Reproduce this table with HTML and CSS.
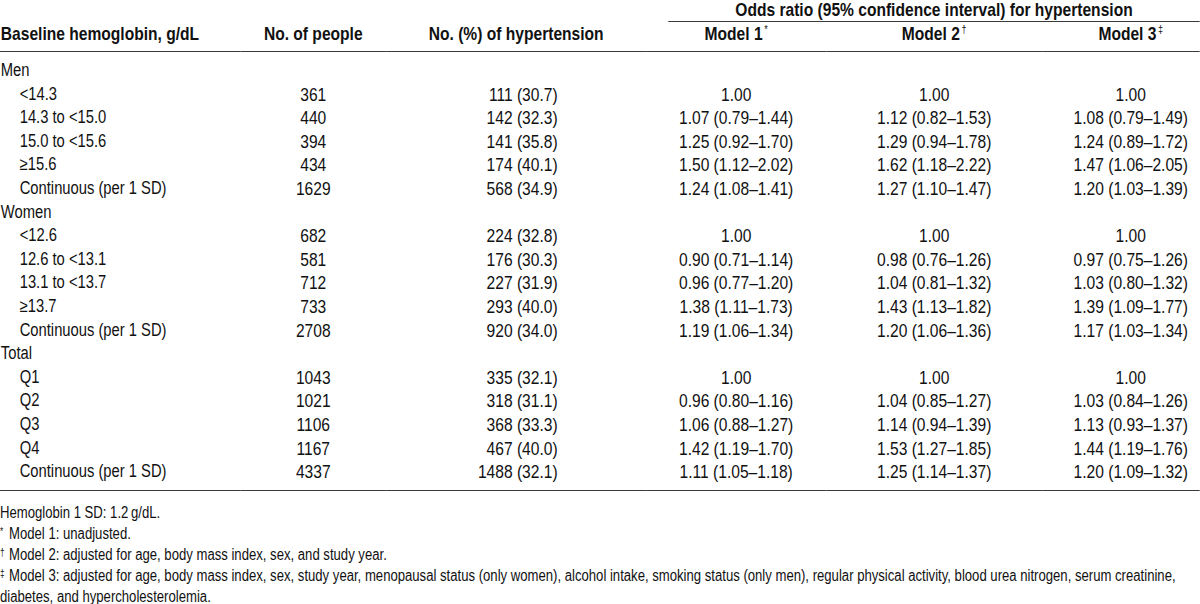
FILE: index.html
```html
<!DOCTYPE html>
<html lang="en">
<head>
<meta charset="utf-8">
<title>Hemoglobin and hypertension</title>
<link rel="stylesheet" href="styles.css">
</head>
<body>
<div class="frame">
<div class="page">
<table class="tbl">
  <colgroup>
    <col class="w1"><col class="w2"><col class="w3"><col class="w4"><col class="w5"><col class="w6">
  </colgroup>
  <thead>
    <tr class="hr1">
      <th rowspan="2" class="hl hb">Baseline hemoglobin, g/dL</th>
      <th rowspan="2" class="hb">No. of people</th>
      <th rowspan="2" class="hb">No. (%) of hypertension</th>
      <th colspan="3" class="hspan"><div class="hspan-in">Odds ratio (95% confidence interval) for hypertension</div></th>
    </tr>
    <tr class="hr2">
      <th class="hb">Model 1<sup>*</sup></th>
      <th class="hb">Model 2<sup>†</sup></th>
      <th class="hb c6">Model 3<sup>‡</sup></th>
    </tr>
  </thead>
  <tbody>
    <tr class="first"><td class="grp">Men</td><td></td><td></td><td></td><td></td><td></td></tr>
    <tr><td class="sub">&lt;14.3</td><td class="n">361</td><td class="p">111 (30.7)</td><td class="n">1.00</td><td class="n">1.00</td><td class="n c6">1.00</td></tr>
    <tr><td class="sub">14.3 to &lt;15.0</td><td class="n">440</td><td class="p">142 (32.3)</td><td class="n">1.07 (0.79–1.44)</td><td class="n">1.12 (0.82–1.53)</td><td class="n c6">1.08 (0.79–1.49)</td></tr>
    <tr><td class="sub">15.0 to &lt;15.6</td><td class="n">394</td><td class="p">141 (35.8)</td><td class="n">1.25 (0.92–1.70)</td><td class="n">1.29 (0.94–1.78)</td><td class="n c6">1.24 (0.89–1.72)</td></tr>
    <tr><td class="sub">≥15.6</td><td class="n">434</td><td class="p">174 (40.1)</td><td class="n">1.50 (1.12–2.02)</td><td class="n">1.62 (1.18–2.22)</td><td class="n c6">1.47 (1.06–2.05)</td></tr>
    <tr><td class="sub">Continuous (per 1 SD)</td><td class="n">1629</td><td class="p">568 (34.9)</td><td class="n">1.24 (1.08–1.41)</td><td class="n">1.27 (1.10–1.47)</td><td class="n c6">1.20 (1.03–1.39)</td></tr>
    <tr><td class="grp">Women</td><td></td><td></td><td></td><td></td><td></td></tr>
    <tr><td class="sub">&lt;12.6</td><td class="n">682</td><td class="p">224 (32.8)</td><td class="n">1.00</td><td class="n">1.00</td><td class="n c6">1.00</td></tr>
    <tr><td class="sub">12.6 to &lt;13.1</td><td class="n">581</td><td class="p">176 (30.3)</td><td class="n">0.90 (0.71–1.14)</td><td class="n">0.98 (0.76–1.26)</td><td class="n c6">0.97 (0.75–1.26)</td></tr>
    <tr><td class="sub">13.1 to &lt;13.7</td><td class="n">712</td><td class="p">227 (31.9)</td><td class="n">0.96 (0.77–1.20)</td><td class="n">1.04 (0.81–1.32)</td><td class="n c6">1.03 (0.80–1.32)</td></tr>
    <tr><td class="sub">≥13.7</td><td class="n">733</td><td class="p">293 (40.0)</td><td class="n">1.38 (1.11–1.73)</td><td class="n">1.43 (1.13–1.82)</td><td class="n c6">1.39 (1.09–1.77)</td></tr>
    <tr><td class="sub">Continuous (per 1 SD)</td><td class="n">2708</td><td class="p">920 (34.0)</td><td class="n">1.19 (1.06–1.34)</td><td class="n">1.20 (1.06–1.36)</td><td class="n c6">1.17 (1.03–1.34)</td></tr>
    <tr><td class="grp">Total</td><td></td><td></td><td></td><td></td><td></td></tr>
    <tr><td class="sub">Q1</td><td class="n">1043</td><td class="p">335 (32.1)</td><td class="n">1.00</td><td class="n">1.00</td><td class="n c6">1.00</td></tr>
    <tr><td class="sub">Q2</td><td class="n">1021</td><td class="p">318 (31.1)</td><td class="n">0.96 (0.80–1.16)</td><td class="n">1.04 (0.85–1.27)</td><td class="n c6">1.03 (0.84–1.26)</td></tr>
    <tr><td class="sub">Q3</td><td class="n">1106</td><td class="p">368 (33.3)</td><td class="n">1.06 (0.88–1.27)</td><td class="n">1.14 (0.94–1.39)</td><td class="n c6">1.13 (0.93–1.37)</td></tr>
    <tr><td class="sub">Q4</td><td class="n">1167</td><td class="p">467 (40.0)</td><td class="n">1.42 (1.19–1.70)</td><td class="n">1.53 (1.27–1.85)</td><td class="n c6">1.44 (1.19–1.76)</td></tr>
    <tr class="last"><td class="sub">Continuous (per 1 SD)</td><td class="n">4337</td><td class="p">1488 (32.1)</td><td class="n">1.11 (1.05–1.18)</td><td class="n">1.25 (1.14–1.37)</td><td class="n c6">1.20 (1.09–1.32)</td></tr>
  </tbody>
</table>
<div class="notes">
  <p class="note">Hemoglobin 1 SD: 1.2&#8201;g/dL.</p>
  <p class="note"><sup class="mark">*</sup>Model 1: unadjusted.</p>
  <p class="note"><sup class="mark">†</sup>Model 2: adjusted for age, body mass index, sex, and study year.</p>
  <p class="note"><sup class="mark">‡</sup>Model 3: adjusted for age, body mass index, sex, study year, menopausal status (only women), alcohol intake, smoking status (only men), regular physical activity, blood urea nitrogen, serum creatinine, diabetes, and hypercholesterolemia.</p>
</div>
</div>
</div>
</body>
</html>
```
FILE: styles.css
```css
html, body {
  margin: 0;
  padding: 0;
  background: #ffffff;
  overflow: hidden;
}

body {
  color: #111111;
  font-family: "Liberation Sans", Arial, sans-serif;
}

.frame {
  width: 1200px;
  overflow: hidden;
}

/* The reference is set in a condensed grotesque; the sheet is laid out
   at 1/0.82 of its width and narrowed back to 1200px. */
.page {
  width: 1463px;
  transform: scaleX(0.82);
  transform-origin: 0 0;
}

.tbl {
  width: 1463px;
  border-collapse: collapse;
  table-layout: fixed;
  font-size: 18px;
}

.w1 { width: 293px; }
.w2 { width: 178px; }
.w3 { width: 317px; }
.w4 { width: 219.5px; }
.w5 { width: 263.5px; }
.w6 { width: 192px; }

th {
  font-weight: bold;
  font-size: 19px;
  padding: 0;
  text-align: center;
  vertical-align: bottom;
  white-space: nowrap;
}

th.hl {
  text-align: left;
  padding-left: 1px;
}

.hr1 th.hspan {
  height: 23px;
  vertical-align: top;
}

.hspan-in {
  margin-left: 27px;
  line-height: 20px;
  padding-bottom: 1px;
  border-bottom: 1.5px solid #3a3a3a;
}

th.hb {
  border-bottom: 1.5px solid #3a3a3a;
  padding-bottom: 6px;
  line-height: 22px;
}

th.c6, td.c6 {
  padding-left: 24px;
}

sup {
  font-size: 11px;
  font-weight: normal;
  vertical-align: 7px;
  line-height: 0;
  margin-left: 2px;
}

td {
  padding: 0;
  line-height: 23.6px;
  white-space: nowrap;
}

td.grp {
  padding-left: 1px;
}

td.sub {
  padding-left: 24px;
}

td.n {
  text-align: center;
  font-size: 19px;
}

td.p {
  text-align: right;
  padding-right: 108px;
  font-size: 19px;
}

tr.first td {
  padding-top: 7px;
}

tr.last td {
  padding-bottom: 6px;
  border-bottom: 1.5px solid #3a3a3a;
}

.notes {
  padding-top: 11px;
  font-size: 16px;
}

.note {
  margin: 0;
  line-height: 21px;
}

sup.mark {
  font-size: 10px;
  vertical-align: 4px;
  margin-left: 0;
  margin-right: 3px;
  display: inline-block;
  min-width: 8px;
}
```
